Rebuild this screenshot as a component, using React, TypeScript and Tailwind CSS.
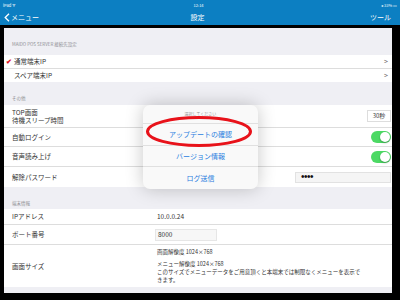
import React from "react";

const F = { fontFamily: '"Noto Sans CJK JP", "Noto Sans", sans-serif' };

function Toggle() {
  return (
    <div className="relative h-[12px] w-[20px] rounded-full bg-[#4cd964]">
      <div className="absolute right-[1px] top-[1px] h-[10px] w-[10px] rounded-full bg-white shadow-[0_1px_2px_rgba(0,0,0,0.3)]" />
    </div>
  );
}

function Chevron() {
  return <span className="text-[7px] leading-none text-[#666]">&gt;</span>;
}

export default function App() {
  return (
    <div className="relative h-[300px] w-[400px] overflow-hidden bg-black" style={F}>
      {/* top blue bar */}
      <div className="flex h-[25px] w-full flex-col bg-[#0c7fc2] text-white">
        <div className="flex h-[10px] items-center justify-between px-[3px] text-[4px] leading-none">
          <span>iPad ᯤ</span>
          <span>12:14</span>
          <span>◂ 33% ▭</span>
        </div>
        <div className="flex h-[15px] items-center justify-between pl-[4px] pr-[9px] text-[7px] leading-none">
          <span className="flex w-[60px] items-center gap-[1px]">
            <svg width="6" height="9" viewBox="0 0 6 9"><path d="M5 0.8 L1.2 4.5 L5 8.2" stroke="white" strokeWidth="1.3" fill="none" /></svg>
            <span>メニュー</span>
          </span>
          <span>設定</span>
          <span className="w-[60px] text-right">ツール</span>
        </div>
      </div>
      {/* content */}
      <div className="ml-[4px] mt-[3px] flex h-[265px] w-[388px] flex-col bg-[#efeff4] text-[6.5px] leading-none text-[#333]">
        <div className="flex h-[27px] items-end pb-[9px] pl-[8px] text-[4.5px] text-[#8e8e93]">MAIDO POS SERVER 接続先設定</div>
        <div className="flex h-[14px] items-center justify-between border-b border-[#ddd] bg-white pl-[2px] pr-[4px]">
          <span className="flex items-center gap-[2px]">
            <span className="text-[7px] font-bold text-[#e0101a]">✔</span>
            <span>通常端末IP</span>
          </span>
          <Chevron />
        </div>
        <div className="flex h-[13px] items-center justify-between bg-white pl-[10px] pr-[4px]">
          <span>スペア端末IP</span>
          <Chevron />
        </div>
        <div className="flex h-[23px] items-end pb-[5px] pl-[8px] text-[4.5px] text-[#8e8e93]">その他</div>
        <div className="flex h-[23px] items-center justify-between border-b border-[#ddd] bg-white pl-[8px] pr-[1px]">
          <div className="flex flex-col gap-[2px]">
            <span>TOP画面</span>
            <span>待機スリープ時間</span>
          </div>
          <div className="flex h-[12px] w-[24px] items-center justify-center border border-[#ddd] bg-white text-[6px]">30秒</div>
        </div>
        <div className="flex h-[19px] items-center justify-between border-b border-[#ddd] bg-white pl-[8px] pr-[1px]">
          <span>自動ログイン</span>
          <Toggle />
        </div>
        <div className="flex h-[20px] items-center justify-between border-b border-[#ddd] bg-white pl-[8px] pr-[1px]">
          <span>音声読み上げ</span>
          <Toggle />
        </div>
        <div className="flex h-[20px] items-center justify-between bg-white pl-[8px] pr-[1px]">
          <span>解除パスワード</span>
          <div className="flex h-[11px] w-[96px] items-center border border-[#e2e2e2] bg-[#f5f5f5] pl-[5px] text-[10px] tracking-[-0.5px] text-[#111]" style={{ fontFamily: '"Liberation Sans", sans-serif' }}>••••</div>
        </div>
        <div className="flex h-[22px] items-end pb-[4px] pl-[8px] text-[4.5px] text-[#8e8e93]">端末情報</div>
        <div className="flex h-[16px] items-center border-b border-[#ddd] bg-white pl-[8px]">
          <span className="w-[145px]">IPアドレス</span>
          <span>10.0.0.24</span>
        </div>
        <div className="flex h-[20px] items-center border-b border-[#ddd] bg-white pl-[8px]">
          <span className="w-[143px]">ポート番号</span>
          <div className="flex h-[12px] w-[62px] items-center border border-[#e6e6e6] bg-[#f7f7f7] pl-[2px]">8000</div>
        </div>
        <div className="flex h-[42px] items-center bg-white pl-[8px]">
          <span className="w-[145px]">画面サイズ</span>
          <div className="flex flex-col text-[5.5px] leading-[8px]">
            <span className="mb-[4px]">画面解像度 1024×768</span>
            <span>メニュー解像度 1024×768</span>
            <span>このサイズでメニューデータをご用意頂くと本端末では制限なくメニューを表示で</span>
            <span>きます。</span>
          </div>
        </div>
      </div>
      {/* popup */}
      <div className="absolute left-[143px] top-[105px] flex h-[84px] w-[115px] flex-col rounded-[7px] bg-[#f9f9f9] text-[7px] leading-none text-[#2b7fe0] shadow-[0_0_18px_rgba(0,0,0,0.22)]">
        <div className="flex h-[19px] items-center justify-center border-b border-[#e0e0e0] text-[4px] text-[#999]">選択してください</div>
        <div className="flex h-[22px] items-center justify-center border-b border-[#e0e0e0]">アップデートの確認</div>
        <div className="flex h-[21px] items-center justify-center border-b border-[#e0e0e0]">バージョン情報</div>
        <div className="flex flex-1 items-center justify-center">ログ送信</div>
      </div>
      {/* red circle annotation */}
      <svg className="absolute left-[145px] top-[115px]" width="108" height="33" viewBox="0 0 108 33">
        <ellipse cx="54" cy="16.5" rx="51.5" ry="14" stroke="#e8121a" strokeWidth="3" fill="none" />
      </svg>
    </div>
  );
}
